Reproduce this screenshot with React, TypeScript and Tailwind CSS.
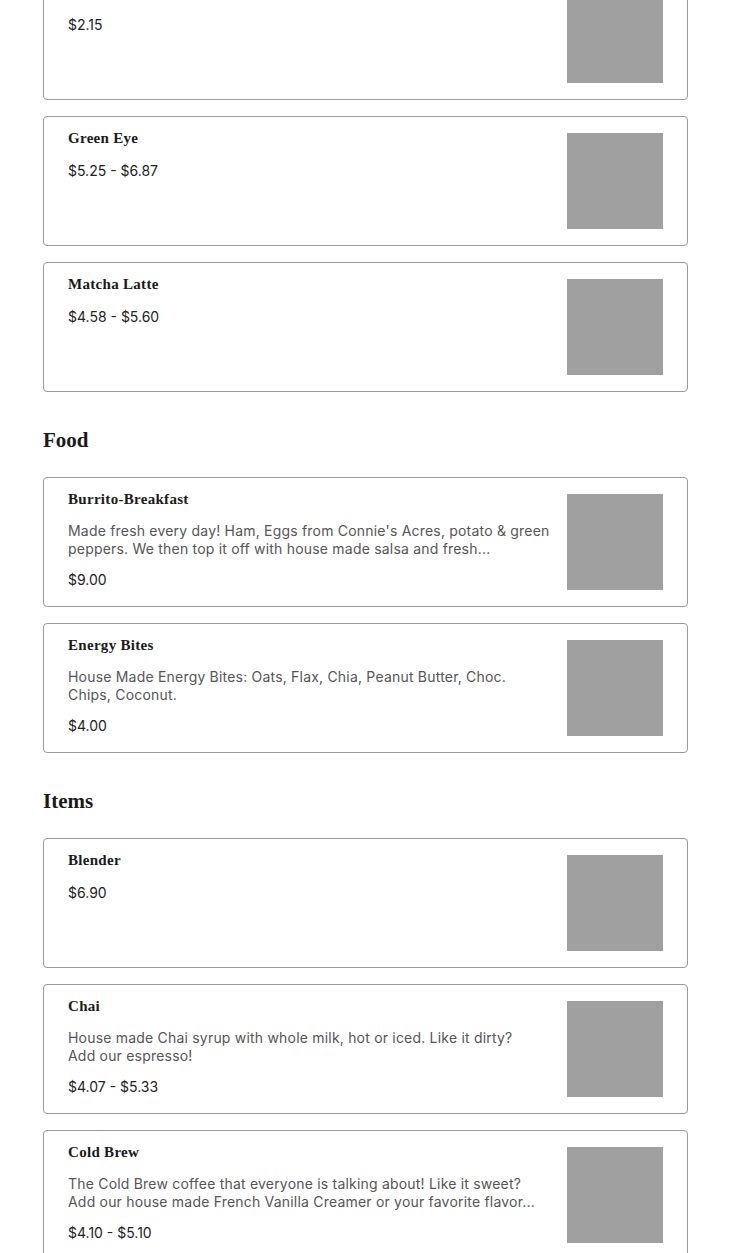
import React from "react";

type Item = { name: string; desc?: string[]; price: string };

const sections: { title?: string; items: Item[] }[] = [
  {
    items: [
      { name: "Cold Brew Latte", price: "$2.15" },
      { name: "Green Eye", price: "$5.25 - $6.87" },
      { name: "Matcha Latte", price: "$4.58 - $5.60" },
    ],
  },
  {
    title: "Food",
    items: [
      {
        name: "Burrito-Breakfast",
        desc: [
          "Made fresh every day! Ham, Eggs from Connie's Acres, potato & green",
          "peppers. We then top it off with house made salsa and fresh...",
        ],
        price: "$9.00",
      },
      {
        name: "Energy Bites",
        desc: [
          "House Made Energy Bites: Oats, Flax, Chia, Peanut Butter, Choc.",
          "Chips, Coconut.",
        ],
        price: "$4.00",
      },
    ],
  },
  {
    title: "Items",
    items: [
      { name: "Blender", price: "$6.90" },
      {
        name: "Chai",
        desc: [
          "House made Chai syrup with whole milk, hot or iced. Like it dirty?",
          "Add our espresso!",
        ],
        price: "$4.07 - $5.33",
      },
      {
        name: "Cold Brew",
        desc: [
          "The Cold Brew coffee that everyone is talking about! Like it sweet?",
          "Add our house made French Vanilla Creamer or your favorite flavor...",
        ],
        price: "$4.10 - $5.10",
      },
    ],
  },
];

function Card({ item }: { item: Item }) {
  return (
    <div className="flex justify-between gap-4 rounded-[4px] border border-[#9a9a9a] bg-white py-4 pl-6 pr-6">
      <div className="min-w-0 flex-1">
        <div className="-mt-[5px] text-[15px] font-bold leading-[20px] tracking-[0.3px] text-[#1a1a1a] [font-family:'Liberation_Serif',serif]">
          {item.name}
        </div>
        {item.desc && (
          <div className="mt-[13px] text-[14px] leading-[18px] tracking-[0.2px] text-[#555] [font-family:Inter,sans-serif]">
            {item.desc.map((line, i) => (
              <span key={i} className="block whitespace-nowrap">
                {line}
              </span>
            ))}
          </div>
        )}
        <div
          className={
            (item.desc ? "mt-[13px] " : "mt-[14px] ") +
            "text-[14px] leading-[18px] text-[#222] [font-family:Inter,sans-serif]"
          }
        >
          {item.price}
        </div>
      </div>
      <div className="h-24 w-24 shrink-0 bg-[#a0a0a0]" />
    </div>
  );
}

export default function App() {
  return (
    <div className="min-h-screen bg-white">
      <div className="ml-[43px] w-[645px] -mt-[30px] pb-8">
        {sections.map((s, i) => (
          <div key={i}>
            {s.title && (
              <h2 className="mt-[35px] mb-[24px] text-[21px] font-bold leading-[26px] text-[#1a1a1a] [font-family:'Liberation_Serif',serif]">
                {s.title}
              </h2>
            )}
            <div className="flex flex-col gap-4">
              {s.items.map((it) => (
                <Card key={it.name} item={it} />
              ))}
            </div>
          </div>
        ))}
      </div>
    </div>
  );
}
